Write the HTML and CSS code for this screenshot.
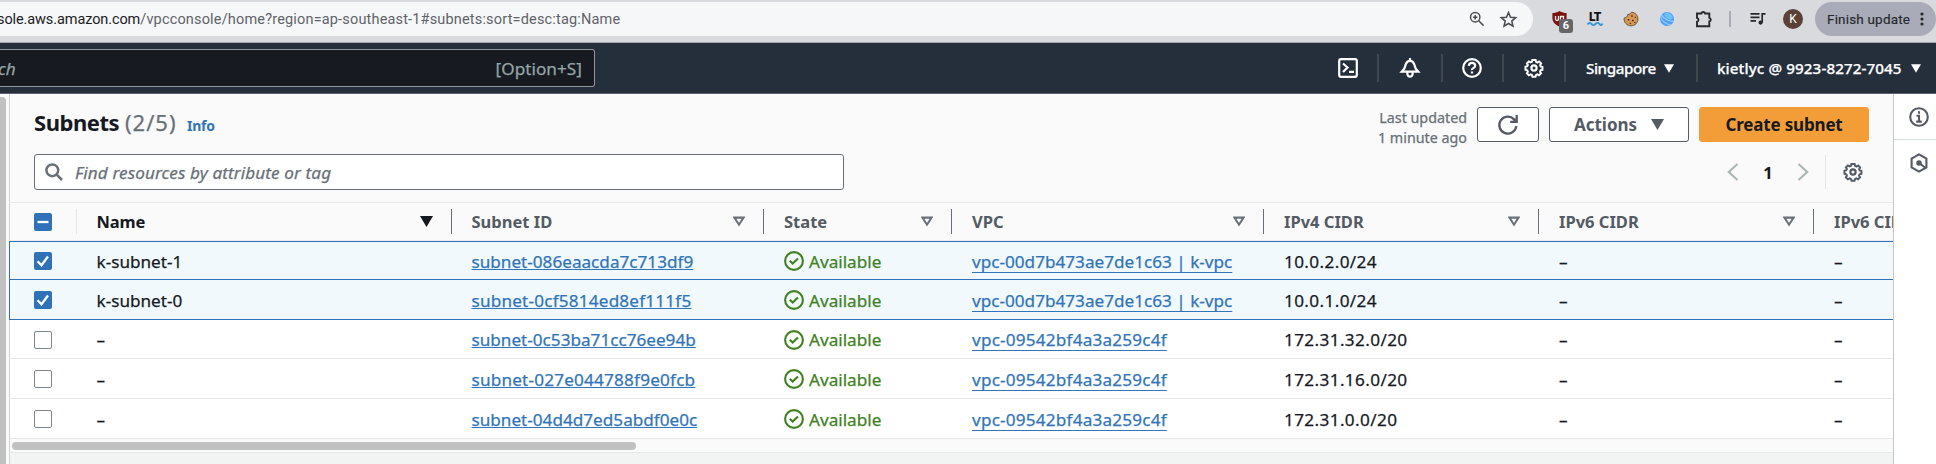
FILE: index.html
```html
<!DOCTYPE html>
<html lang="en">
<head>
<meta charset="utf-8">
<title>Subnets | VPC Console</title>
<link rel="stylesheet" href="styles.css">
</head>
<body>
<svg class="defs" aria-hidden="true">
  <symbol id="gear" viewBox="0 0 20 20"><path d="M8.2 1.2h3.6l.5 2 1.5.7 1.9-1.2 2.2 2.2-1.1 1.9.6 1.5 2 .5v3.2l-2 .6-.7 1.5 1.1 1.9-2.2 2.2-1.9-1.1-1.4.6-.6 2H8.3l-.6-2-1.5-.6-1.9 1.1L2.100 16l1.100-1.900-.700-1.500-2-.6V8.700l2-.6.700-1.500L2.100 4.800 4.300 2.700l1.900 1.100 1.500-.6z" transform="translate(1 1) scale(.9)"/><circle cx="10" cy="10" r="2.600"/></symbol>
  <symbol id="ok" viewBox="0 0 20 20"><circle cx="10" cy="10" r="8.900"/><path d="M5.800 9.800l2.900 2.800 5.300-5"/></symbol>
  <symbol id="tri" viewBox="0 0 13 11"><path d="M0 0h13L6.500 11z"/></symbol>
  <symbol id="sort" viewBox="0 0 13 11"><path d="M1.500 1.300h10L6.500 9z"/></symbol>
</svg>

<div class="browser">
  <div class="omnibox">
    <div class="url"><span class="domain">sole.aws.amazon.com</span><span class="path">/vpcconsole/home?region=ap-southeast-1#subnets:sort=desc:tag:Name</span></div>
    <svg class="mag" viewBox="0 0 16 16"><circle cx="6.200" cy="6.200" r="4.700"/><path d="M9.700 9.700l4.900 4.900M6.200 4v4.400M4 6.200h4.400"/></svg>
    <svg class="star" viewBox="0 0 16 16"><path d="M8 1.400l1.900 4.500 4.900.4-3.700 3.200 1.100 4.800L8 11.800l-4.200 2.500 1.100-4.800L1.200 6.300l4.900-.4z"/></svg>
  </div>
  <div class="extensions">
    <div class="shield"><svg viewBox="0 0 15 16"><path d="M7.500 0C5 1.500 2.500 2 .4 2v5c0 4.500 3.500 7 7.100 8.600C11 14 14.600 11.500 14.600 7V2C12.500 2 10 1.500 7.500 0z" fill="#7c1212"/><path d="M3.500 5v3q0 1.500 1.500 1.500T6.500 8V5M8.500 12V5.500h3V9" stroke="#eee" fill="none" stroke-width="1.300"/></svg><span class="badge">6</span></div>
    <div class="lt"><b>LT</b><svg viewBox="0 0 16 4"><path d="M.5 2.500Q2.500-.2 4.500 2t4 0 4 0 3-.5" fill="none" stroke="#3c96d6" stroke-width="1.900"/></svg></div>
    <svg class="cookie" viewBox="0 0 16 16"><path d="M8.600 1.200c-1 1.500-2.200 2.500-3.800 2.200C4.400 5.500 3.400 6.400 1.100 7.100c-.4 4.400 2.900 7.700 6.900 7.700 4 0 6.900-3 6.900-6.800S12.300 1.600 8.600 1.200z" fill="#d9984f" stroke="#5e4733" stroke-width=".9"/><path d="M8.200 4.300h1.500v1.500H8.200zM4.800 8h1.500v1.500H4.800zM9 8.700h1.500v1.500H9zM6.700 11.700h1.200v1.200H6.700zM11.700 5.800h1.100v1.100h-1.100zM11.300 11h1.100v1.100h-1.100z" fill="#2f2825" stroke="none"/></svg>
    <svg class="ball" viewBox="0 0 16 16"><circle cx="8" cy="8" r="7" fill="#4d9ff8"/><path d="M1.500 5q1 7 10 9M2.500 3.500q3 6 12 7" stroke="#a5d1fb" fill="none" stroke-width="1.100"/><ellipse cx="9.500" cy="5" rx="4.500" ry="2.600" transform="rotate(35 9.500 5)" fill="#6ec2fb"/></svg>
    <svg class="puzzle" viewBox="0 0 18 18"><path d="M2 3.500h4.400a1.900 1.900 0 0 1 3.700 0h4.200v4.300a1.900 1.900 0 0 1 0 3.700v4.700H2v-4.400a2.100 2.100 0 0 0 0-4z"/></svg>
    <i class="split"></i>
    <svg class="queue" viewBox="0 0 16 14"><path d="M.5 1.800h9M.5 5.300h9M.5 8.800h5.500M12.200 10.500V1.800h3.300"/><circle cx="10.600" cy="10.600" r="2.100"/></svg>
    <span class="avatar">K</span>
  </div>
  <div class="update"><span>Finish update</span><svg viewBox="0 0 4 14"><circle cx="2" cy="2" r="1.600"/><circle cx="2" cy="7" r="1.600"/><circle cx="2" cy="12" r="1.600"/></svg></div>
</div>

<header class="nav">
  <div class="search"><em>ch</em><span>[Option+S]</span></div>
  <div class="tools">
    <div class="tool t1"><svg viewBox="0 0 20 20"><rect x="1.200" y="1.200" width="17.600" height="17.600" rx="1.800"/><path d="M5 5.500l4.500 4L5 14M11 13.900h5"/></svg></div>
    <div class="tool t2"><svg viewBox="0 0 20 20"><path d="M10 0v2.500M1.700 13.700h16.600l-2.600-3-1.700-5Q12.700 2.900 10 2.900T6 5.700l-1.700 5zM7.400 14.500v1.600q.4 2.500 2.600 2.500t2.600-2.500v-1.600"/></svg></div>
    <div class="tool t3"><svg viewBox="0 0 20 20"><circle cx="10" cy="10" r="8.800"/><path d="M6.800 7.800Q7 4.900 10 4.900t3.200 2.700q0 1.500-1.700 2.300T10 12.200M10 13.500v2.100"/></svg></div>
    <div class="tool t4"><svg><use href="#gear"/></svg></div>
    <div class="region"><span>Singapore</span><svg><use href="#tri"/></svg></div>
    <div class="account"><span>kietlyc @ 9923-8272-7045</span><svg><use href="#tri"/></svg></div>
  </div>
</header>

<div class="page">
  <div class="gutter"><i></i></div>
  <main class="main">
    <div class="heading">
      <h1>Subnets</h1><span class="count">(2/5)</span><a class="info">Info</a>
      <div class="updated">Last updated<br>1 minute ago</div>
      <button class="btn refresh"><svg viewBox="0 0 20 20"><path d="M18.300 11a8.500 8.500 0 1 1-2.200-6.600l2 2.200M18.700 0v6.900h-6.500"/></svg></button>
      <button class="btn actions"><span>Actions</span><svg><use href="#tri"/></svg></button>
      <button class="btn create"><span>Create subnet</span></button>
    </div>
    <div class="filters">
      <div class="filter"><svg viewBox="0 0 18 18"><circle cx="7.300" cy="7.300" r="5.900"/><path d="M11.700 11.700l5.300 5.300"/></svg><em>Find resources by attribute or tag</em></div>
      <div class="pager">
        <svg class="chev" viewBox="0 0 12 18"><path d="M10.500 1L1.800 9l8.700 8"/></svg>
        <b>1</b>
        <svg class="chev" viewBox="0 0 12 18"><path d="M1.500 1l8.700 8-8.700 8"/></svg>
        <i></i>
        <svg class="prefs"><use href="#gear"/></svg>
      </div>
    </div>
    <div class="table">
      <div class="row head">
        <div class="cell pick"><span class="box on"><svg viewBox="0 0 18 18"><path d="M3.500 9h11"/></svg></span><i class="bar faint"></i></div>
        <div class="cell sorted"><span>Name</span><svg><use href="#tri"/></svg><i class="bar"></i></div>
        <div class="cell"><span>Subnet ID</span><svg><use href="#sort"/></svg><i class="bar"></i></div>
        <div class="cell"><span>State</span><svg><use href="#sort"/></svg><i class="bar"></i></div>
        <div class="cell"><span>VPC</span><svg><use href="#sort"/></svg><i class="bar"></i></div>
        <div class="cell"><span>IPv4 CIDR</span><svg><use href="#sort"/></svg><i class="bar"></i></div>
        <div class="cell"><span>IPv6 CIDR</span><svg><use href="#sort"/></svg><i class="bar"></i></div>
        <div class="cell"><span>IPv6 CIDR</span></div>
      </div>
      <div class="row selected first">
        <div class="cell pick"><span class="box on"><svg viewBox="0 0 18 18"><path d="M3.500 9.200l4 4L14 4.500"/></svg></span></div>
        <div class="cell">k-subnet-1</div><div class="cell"><a class="id">subnet-086eaacda7c713df9</a></div>
        <div class="cell state"><svg><use href="#ok"/></svg>Available</div>
        <div class="cell"><a class="vpc">vpc-00d7b473ae7de1c63 | k-vpc</a></div>
        <div class="cell ip">10.0.2.0/24</div><div class="cell">–</div><div class="cell">–</div>
      </div>
      <div class="row selected">
        <div class="cell pick"><span class="box on"><svg viewBox="0 0 18 18"><path d="M3.500 9.200l4 4L14 4.500"/></svg></span></div>
        <div class="cell">k-subnet-0</div><div class="cell"><a class="id wide">subnet-0cf5814ed8ef111f5</a></div>
        <div class="cell state"><svg><use href="#ok"/></svg>Available</div>
        <div class="cell"><a class="vpc">vpc-00d7b473ae7de1c63 | k-vpc</a></div>
        <div class="cell ip">10.0.1.0/24</div><div class="cell">–</div><div class="cell">–</div>
      </div>
      <div class="row short">
        <div class="cell pick"><span class="box"></span></div>
        <div class="cell">–</div><div class="cell"><a class="id">subnet-0c53ba71cc76ee94b</a></div>
        <div class="cell state"><svg><use href="#ok"/></svg>Available</div>
        <div class="cell"><a class="vpc wide">vpc-09542bf4a3a259c4f</a></div>
        <div class="cell ip">172.31.32.0/20</div><div class="cell">–</div><div class="cell">–</div>
      </div>
      <div class="row">
        <div class="cell pick"><span class="box"></span></div>
        <div class="cell">–</div><div class="cell"><a class="id wide">subnet-027e044788f9e0fcb</a></div>
        <div class="cell state"><svg><use href="#ok"/></svg>Available</div>
        <div class="cell"><a class="vpc wide">vpc-09542bf4a3a259c4f</a></div>
        <div class="cell ip">172.31.16.0/20</div><div class="cell">–</div><div class="cell">–</div>
      </div>
      <div class="row">
        <div class="cell pick"><span class="box"></span></div>
        <div class="cell">–</div><div class="cell"><a class="id">subnet-04d4d7ed5abdf0e0c</a></div>
        <div class="cell state"><svg><use href="#ok"/></svg>Available</div>
        <div class="cell"><a class="vpc wide">vpc-09542bf4a3a259c4f</a></div>
        <div class="cell ip">172.31.0.0/20</div><div class="cell">–</div><div class="cell">–</div>
      </div>
    </div>
    <div class="hscroll"><i></i></div>
  </main>
  <aside class="rail">
    <div class="info-tab"><svg viewBox="0 0 20 20"><circle cx="10" cy="10" r="8.800"/><path d="M10 4.200v2.500M7.500 8.800H10v5.500M7.200 14.600h5.600"/></svg></div>
    <div class="hex-tab"><svg viewBox="0 0 20 20"><path d="M10 1.400l7.400 4.100v9L10 18.600l-7.400-4.100v-9z"/><circle class="dot" cx="10" cy="10" r="1.700"/><path d="M10 10l6 4.500"/></svg></div>
  </aside>
</div>
</body>
</html>
```
FILE: styles.css
```css
* { box-sizing: border-box; }
body {
  margin: 0;
  width: 1936px;
  height: 464px;
  overflow: hidden;
  display: flex;
  flex-direction: column;
  background: #f2f3f3;
  color: #16191f;
  font: 17.150px "Noto Sans", "Open Sans", sans-serif;
  -webkit-text-stroke: .25px;
}
svg { display: block; flex: none; fill: none; stroke: currentColor; overflow: visible; }
.defs { position: absolute; width: 0; height: 0; }

/* Browser toolbar */
.browser {
  flex: none;
  height: 43px;
  display: flex;
  padding-top: 2px;
  background: #d9dadd;
  border-bottom: 1px solid #a3a8ac;
}
.omnibox {
  width: 1533px;
  height: 34px;
  display: flex;
  align-items: center;
  padding-right: 16px;
  background: #f6f7f9;
  border-radius: 0 17px 17px 0;
}
.url { flex: 1; margin-left: -3px; white-space: nowrap; font: 14.500px/35px Roboto, sans-serif; -webkit-text-stroke: 0; }
.domain { letter-spacing: -.1px; color: #202124; }
.path { letter-spacing: .17px; color: #5f6368; }
.omnibox svg { color: #4b4f54; stroke-width: 1.500; }
.mag { width: 16px; height: 16px; margin-right: 15px; }
.star { width: 17px; height: 17px; }
.extensions { flex: 1; height: 34px; display: flex; align-items: center; padding-left: 19px; -webkit-text-stroke: 0; }
.shield { position: relative; margin-right: 20px; }
.shield svg { width: 15px; height: 16px; stroke: none; }
.badge {
  position: absolute;
  left: 7px;
  top: 8px;
  width: 14px;
  height: 14px;
  border-radius: 3px;
  background: #666;
  color: #fff;
  font: 700 11px/14px Roboto, sans-serif;
  text-align: center;
}
.lt { width: 16px; margin-right: 20px; color: #111; }
.lt b { display: block; font: 900 12px/10px Roboto, sans-serif; text-align: center; letter-spacing: -.5px; }
.lt svg { width: 16px; height: 4px; }
.cookie { width: 16px; height: 16px; margin-right: 20px; }
.ball { width: 16px; height: 16px; margin-right: 20px; stroke: none; }
.puzzle { width: 18px; height: 18px; color: #26282b; stroke-width: 1.900; }
.split { width: 2px; height: 16px; margin: 0 19px 0 16px; background: #a9abb8; }
.queue { width: 16px; height: 14px; color: #26282b; stroke-width: 1.700; margin-right: 17px; }
.queue circle { fill: currentColor; stroke: none; }
.avatar {
  width: 20px;
  height: 20px;
  border-radius: 50%;
  background: #5b4037;
  color: #fff;
  font: 12px/20px Roboto, sans-serif;
  text-align: center;
}
.update {
  width: 121px;
  height: 34px;
  display: flex;
  align-items: center;
  justify-content: space-between;
  padding: 0 12px;
  border-radius: 17px;
  background: #a9abb8;
  color: #26282b;
  font: 400 13.500px Roboto, sans-serif;
  letter-spacing: .18px;
  -webkit-text-stroke: .15px;
}
.update svg { width: 4px; height: 14px; fill: currentColor; stroke: none; }

/* Console navigation */
.nav {
  flex: none;
  height: 51px;
  display: flex;
  align-items: center;
  background: #252f3c;
  border-bottom: 1px solid #59626e;
  color: #fff;
}
.search {
  width: 595px;
  height: 38px;
  display: flex;
  align-items: center;
  justify-content: space-between;
  padding-right: 12px;
  background: #171a21;
  border: 1px solid #8d9898;
  border-left: 0;
  border-radius: 0 3px 3px 0;
  color: #95a5a6;
}
.search em { margin-left: -2px; }
.search span { letter-spacing: .05px; }
.tools { margin-left: auto; display: flex; align-items: center; }
.tools > div { height: 28px; display: flex; align-items: center; border-right: 2px solid #41474f; }
.tool { stroke-width: 2.200; }
.tool svg { width: 20px; height: 20px; }
.t1 { width: 41px; }
.t2 { width: 64px; padding-left: 21px; }
.t3 { width: 61px; padding-left: 19px; }
.t4 { width: 62px; padding-left: 20px; }
.region { width: 132px; padding-left: 20px; }
.tools .account { width: 238px; padding-left: 19px; border: 0; }
.region span, .account span { font-size: 15.200px; font-weight: 500; white-space: nowrap; }
.region span { width: 78px; letter-spacing: -.42px; }
.account span { width: 194px; letter-spacing: .1px; }
.region svg, .account svg { width: 10px; height: 9px; fill: currentColor; stroke: none; }

/* Page frame */
.page { flex: 1; display: flex; min-height: 0; }
.gutter { width: 9px; padding-top: 3px; background: #fafafa; }
.gutter i { display: block; width: 6px; height: 100%; background: #c1c1c1; border-radius: 0 4px 0 0; }
.main {
  width: 1884px;
  overflow: hidden;
  background: #fafafa;
  box-shadow: inset 1px 0 #cfd1d3;
}
.rail { flex: 1; background: #fff; border-left: 1px solid #c3c7ca; color: #545b64; }
.rail svg { width: 20px; height: 20px; stroke-width: 2.100; }
.rail .dot { fill: currentColor; }
.info-tab { height: 46px; padding: 13px 0 0 15px; border-bottom: 1px solid #d5dbdb; }
.hex-tab { padding: 13px 0 0 15px; }

/* Title and actions */
.heading { display: flex; align-items: flex-start; height: 60px; padding: 13px 24px 0 25px; }
h1 { margin: -7px 0 0; width: 91px; font-size: 22px; line-height: 32px; letter-spacing: -.45px; padding-top: 6px; -webkit-text-stroke: 0; }
.count { width: 62px; font-size: 22px; line-height: 32px; margin-top: -1px; letter-spacing: 1px; color: #687078; }
.info { font-size: 14px; font-weight: 700; line-height: 20px; margin-top: 9px; letter-spacing: -.25px; color: #3074b9; -webkit-text-stroke: 0; }
.updated { margin: 1px 10px 0 auto; font-size: 14.300px; line-height: 20px; text-align: right; color: #687078; }
.btn {
  height: 35px;
  display: flex;
  align-items: center;
  justify-content: center;
  padding: 0;
  margin-left: 10px;
  border: 1px solid #545b64;
  border-radius: 3px;
  background: #fff;
  color: #545b64;
  font: 700 17px "Noto Sans", sans-serif;
  -webkit-text-stroke: 0;
}
.refresh { width: 62px; margin-left: 0; }
.refresh svg { width: 20px; height: 20px; stroke-width: 2.300; }
.actions { width: 140px; gap: 14px; }
.actions svg { width: 13px; height: 11px; fill: currentColor; stroke: none; }
.create { width: 170px; background: #f29d38; border-color: #f29d38; color: #16191f; letter-spacing: -.17px; }

/* Filter and pagination */
.filters { display: flex; justify-content: space-between; height: 48px; padding: 0 30px 0 25px; }
.filter {
  width: 810px;
  height: 36px;
  display: flex;
  align-items: center;
  gap: 12px;
  padding-left: 10px;
  background: #fff;
  border: 1px solid #687078;
  border-radius: 3px;
  color: #687078;
}
.filter svg { width: 18px; height: 18px; stroke-width: 2.500; }
.filter em { letter-spacing: .1px; }
.pager { height: 36px; display: flex; align-items: center; color: #545b64; }
.chev { width: 12px; height: 18px; stroke-width: 2.200; color: #aab7b8; }
.pager b { width: 58px; text-align: center; color: #16191f; font-size: 16.500px; -webkit-text-stroke: 0; }
.pager i { width: 1px; height: 34px; margin: 0 17px 0 16px; background: #e4e7e9; }
.prefs { width: 20px; height: 20px; stroke-width: 2.200; }

/* Subnet table */
.table { border-top: 1px solid #e6e9ea; }
.row {
  height: 40px;
  display: grid;
  grid-template-columns: 67px 375px 312px 188px 312px 275px 275px 275px;
  background: #fff;
  border-bottom: 1px solid #e6e9ea;
  border-left: 1px solid #cfd1d3;
  white-space: nowrap;
}
.short { height: 39px; }
.head { height: 38px; background: #fafafa; border-bottom-color: #eaeded; color: #545b64; font-size: 16.500px; font-weight: 700; -webkit-text-stroke: 0; }
.cell { display: flex; align-items: center; padding: 1px 0 0 21px; margin-left: -1px; }
.head .cell { padding-top: 0; }
.head .cell svg { width: 12px; height: 11px; margin: -1px 18px 0 auto; stroke-width: 2.200; color: #687078; }
.head .sorted { color: #16191f; letter-spacing: -.1px; }
.head .sorted svg { width: 13px; color: #16191f; fill: currentColor; stroke: none; }
.cell:nth-child(2), .cell:nth-child(3) { padding-left: 20.500px; }
.bar { width: 1px; height: 25px; background: #687078; }
.faint { margin-left: auto; background: #e4e7e9; }
.row .pick { padding-left: 25px; }
.box { width: 18px; height: 18px; background: #fff; border: 1px solid #7d8690; border-radius: 2px; }
.box.on { background: #2f72b8; border: 0; color: #fff; }
.row .pick .box svg { width: 18px; height: 18px; margin: 0; stroke-width: 2.300; color: #fff; }
.selected { background: #f1f9fd; border-bottom-color: #2f72b8; border-left-color: #2f72b8; }
.first { height: 39px; border-top: 1px solid #2f72b8; }
.id, .vpc { color: #3074b9; text-decoration: underline 1px; text-underline-offset: 1px; text-decoration-skip-ink: none; }
.vpc { text-underline-offset: 4px; }
.wide { letter-spacing: .2px; }
.state { gap: 5px; color: #40821f; }
.state svg { width: 20px; height: 20px; stroke-width: 2.100; }
.ip { letter-spacing: .38px; }

.hscroll { height: 14px; padding: 3px 0 0 2px; border-left: 1px solid #cfd1d3; border-bottom: 1px solid #e6e9ea; }
.hscroll i { display: block; width: 624px; height: 8px; border-radius: 4px; background: #c1c1c1; }
.main::after { content: ""; display: block; height: 11px; background: #f2f3f3; border-left: 1px solid #cfd1d3; }
```
